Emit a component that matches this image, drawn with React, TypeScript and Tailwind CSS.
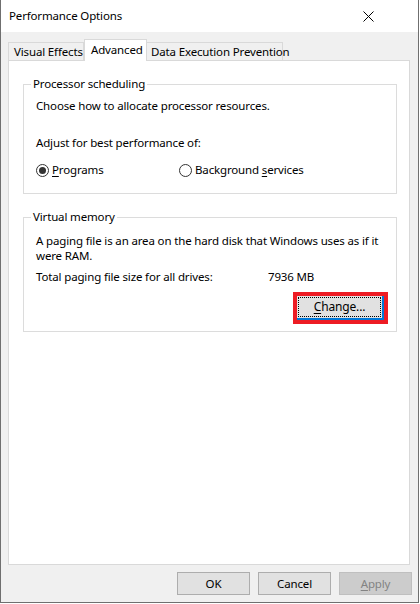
const font = { fontFamily: '"Noto Sans", "Liberation Sans", sans-serif' };

function Radio({ checked }: { checked?: boolean }) {
  return (
    <span className="flex h-[13px] w-[13px] shrink-0 items-center justify-center rounded-full border border-[#333333] bg-white">
      {checked ? <span className="h-[7px] w-[7px] rounded-full bg-[#333333]" /> : null}
    </span>
  );
}

function GroupBox({ title, height, children }: { title: string; height: string; children: React.ReactNode }) {
  return (
    <div className={`relative w-[374px] border border-[#dcdcdc] ${height}`}>
      <span className="absolute left-[7px] top-[-9px] bg-white px-[2px] leading-[16px]">{title}</span>
      {children}
    </div>
  );
}

function DlgButton({ label, ul, disabled }: { label: string; ul?: string; disabled?: boolean }) {
  const rest = ul ? label.slice(1) : label;
  return (
    <button
      className={
        disabled
          ? "flex h-[23px] w-[73px] items-center justify-center border border-[#bfbfbf] bg-[#cccccc] text-[#838383]"
          : "flex h-[23px] w-[73px] items-center justify-center border border-[#adadad] bg-[#e1e1e1] text-black"
      }
    >
      {ul ? <span className="underline underline-offset-2">{ul}</span> : null}
      {rest}
    </button>
  );
}

export default function App() {
  return (
    <div className="h-[604px] w-[420px] bg-white text-[11.5px] tracking-[-0.15px] text-black" style={font}>
      <div className="flex h-[603px] w-[419px] flex-col border-x border-b border-[#6f6f6f] bg-[#f0f0f0]">
        {/* title bar */}
        <div className="flex h-[32px] items-center justify-between bg-white pl-[8px] pr-[44px]">
          <span className="leading-[16px]">Performance Options</span>
          <svg width="11" height="11" viewBox="0 0 11 11" className="mt-[1px]">
            <path d="M0.5 0.5 L10.5 10.5 M10.5 0.5 L0.5 10.5" stroke="#000" strokeWidth="1" fill="none" />
          </svg>
        </div>

        {/* tabs */}
        <div className="mt-[7px] flex h-[21px] items-end whitespace-nowrap pl-[7px]">
          <div className="flex h-[18px] w-[76px] shrink-0 items-center border-x border-t border-[#d9d9d9] bg-[#f0f0f0] pl-[5px] leading-[16px]">
            Visual Effects
          </div>
          <div className="relative z-10 -mb-px flex h-[22px] w-[63px] shrink-0 items-start border-x border-t border-[#d9d9d9] bg-white pl-[6px] pt-[2px] leading-[16px]">
            Advanced
          </div>
          <div className="flex h-[18px] w-[136px] shrink-0 items-center border-r border-t border-[#d9d9d9] bg-[#f0f0f0] pl-[4px] leading-[16px]">
            Data Execution Prevention
          </div>
        </div>

        {/* tab panel */}
        <div className="ml-[7px] h-[505px] w-[402px] border border-[#d9d9d9] bg-white pl-[14px] pt-[23px]">
          <GroupBox title="Processor scheduling" height="h-[110px]">
            <div className="pl-[12px] pt-[13px] leading-[16px]">
              <div>Choose how to allocate processor resources.</div>
              <div className="mt-[21px]">Adjust for best performance of:</div>
              <div className="mt-[11px] flex items-center">
                <div className="flex w-[143px] items-center gap-[3px]">
                  <Radio checked />
                  <span>
                    <span className="underline underline-offset-2">P</span>rograms
                  </span>
                </div>
                <div className="flex items-center gap-[3px]">
                  <Radio />
                  <span>
                    Background <span className="underline underline-offset-2">s</span>ervices
                  </span>
                </div>
              </div>
            </div>
          </GroupBox>

          <div className="mt-[23px]">
            <GroupBox title="Virtual memory" height="h-[115px]">
              <div className="pl-[12px] pr-[8px] pt-[15px]">
                <p className="leading-[15px]">A paging file is an area on the hard disk that Windows uses as if it were RAM.</p>
                <div className="mt-[6px] flex leading-[16px]">
                  <span className="w-[232px]">Total paging file size for all drives:</span>
                  <span>7936 MB</span>
                </div>
                <div className="mt-[7px] flex justify-end">
                  <div className="h-[32px] w-[95px] border-[4px] border-[#ed1c24]">
                    <button className="flex h-full w-full items-center justify-center border-b-2 border-r-2 border-[#0078d7] bg-[#e1e1e1] p-[1px]">
                      <span className="flex h-full w-full items-center justify-center border border-dotted border-black text-[12px]">
                        <span className="underline underline-offset-2">C</span>hange...
                      </span>
                    </button>
                  </div>
                </div>
              </div>
            </GroupBox>
          </div>
        </div>

        {/* buttons */}
        <div className="mt-[7px] flex justify-end gap-[8px] pr-[6px]">
          <DlgButton label="OK" />
          <DlgButton label="Cancel" />
          <DlgButton label="Apply" ul="A" disabled />
        </div>
      </div>
    </div>
  );
}
